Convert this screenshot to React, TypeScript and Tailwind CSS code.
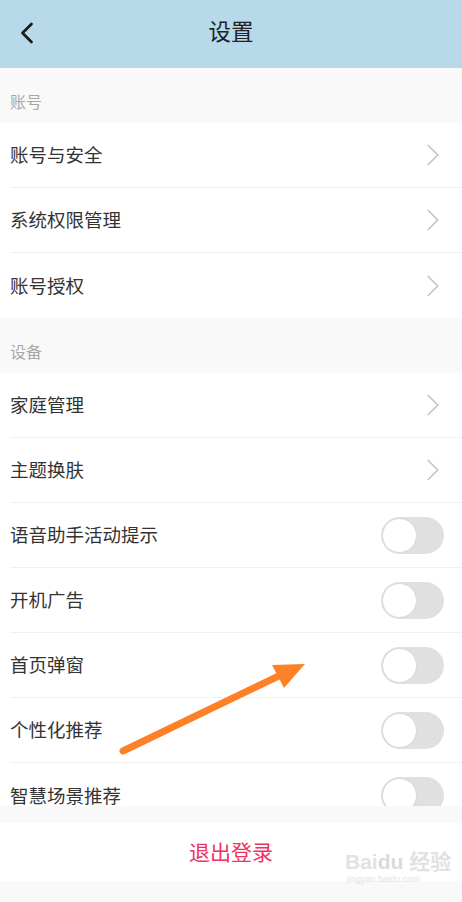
import { ChevronLeft, ChevronRight } from 'lucide-react';

const font = { fontFamily: '"Noto Sans CJK SC", "Noto Sans", sans-serif' };

const Toggle = () => (
  <div className="w-[63px] h-[37px] rounded-full bg-[#e0e0e0] flex items-center pl-[1px] mr-[18px]">
    <div className="w-[35px] h-[35px] rounded-full bg-white border border-[#d8d8d8]" />
  </div>
);

const Row = ({ label, kind, last }: { label: string; kind: 'link' | 'toggle'; last?: boolean }) => (
  <div className="bg-white pl-[10px]">
    <div className={`h-[65px] flex items-center justify-between ${last ? '' : 'border-b border-[#f0f0f0]'}`}>
      <span className="text-[18.5px] text-[#333]">{label}</span>
      {kind === 'link' ? (
        <ChevronRight className="w-[38px] h-[38px] text-[#c4c4c4] mr-[10px]" strokeWidth={1.1} />
      ) : (
        <Toggle />
      )}
    </div>
  </div>
);

const Section = ({ title }: { title: string }) => (
  <div className="h-[55px] bg-[#f9f9f9] flex items-end pb-[10px] pl-[10px]">
    <span className="text-[16px] text-[#a8a8a8]">{title}</span>
  </div>
);

export default function App() {
  return (
    <div className="w-[462px] h-[902px] relative overflow-hidden bg-[#f9f9f9]" style={font}>
      <div className="h-[68px] bg-[#b7d9ea] flex items-center relative">
        <ChevronLeft className="absolute left-[9px] top-[15px] w-[36px] h-[36px] text-[#1a1a1a]" strokeWidth={1.8} />
        <div className="flex-1 text-center text-[22.5px] text-[#222] pb-[6px]">设置</div>
      </div>

      <div className="h-[738px] overflow-hidden">
        <Section title="账号" />
        <Row label="账号与安全" kind="link" />
        <Row label="系统权限管理" kind="link" />
        <Row label="账号授权" kind="link" last />
        <Section title="设备" />
        <Row label="家庭管理" kind="link" />
        <Row label="主题换肤" kind="link" />
        <Row label="语音助手活动提示" kind="toggle" />
        <Row label="开机广告" kind="toggle" />
        <Row label="首页弹窗" kind="toggle" />
        <Row label="个性化推荐" kind="toggle" />
        <Row label="智慧场景推荐" kind="toggle" last />
      </div>

      <div className="mt-[17px] h-[58px] bg-white flex items-center justify-center">
        <span className="text-[21px] text-[#f0325f]">退出登录</span>
      </div>

      <svg className="absolute left-0 top-0 pointer-events-none" width="462" height="902">
        <line x1="123" y1="751" x2="285" y2="673" stroke="#ff8127" strokeWidth="7" strokeLinecap="round" />
        <polygon points="305,664 272,665 284,688" fill="#ff8127" />
      </svg>

      <div className="absolute left-[345px] top-[850px] text-[#e2e2e2] leading-none pointer-events-none">
        <div className="text-[21px] font-bold" style={{ fontFamily: '"Liberation Sans", sans-serif' }}>
          Bai<span className="text-[#dadada]">du</span> <span style={font}>经验</span>
        </div>
        <div className="text-[9px] mt-[3px] pl-[2px]" style={{ fontFamily: '"Liberation Sans", sans-serif' }}>jingyan.baidu.com</div>
      </div>
    </div>
  );
}
